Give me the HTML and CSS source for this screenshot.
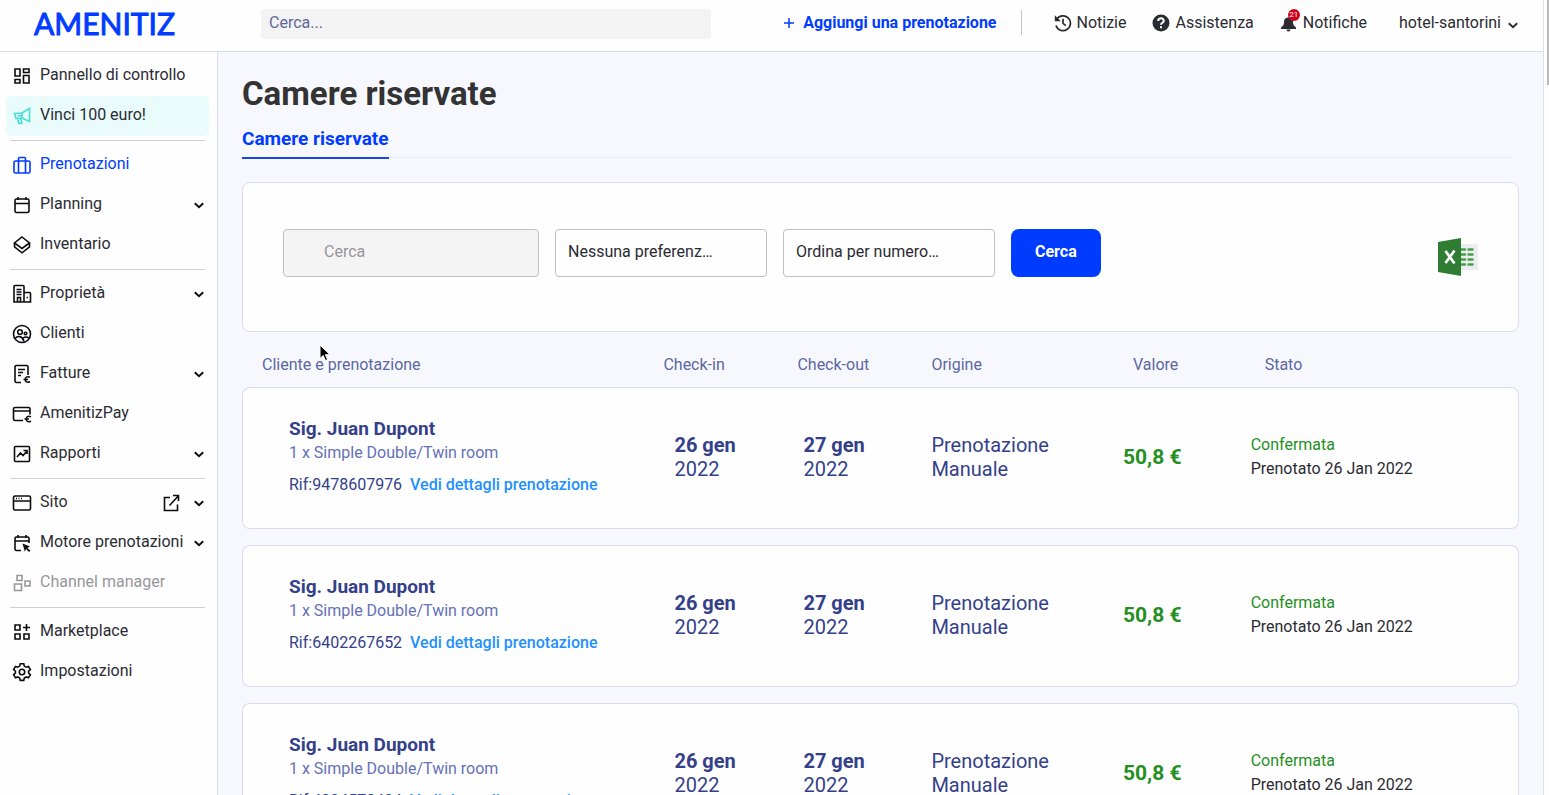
FILE: index.html
```html
<!DOCTYPE html>
<html lang="it">
<head>
    <meta charset="UTF-8">
    <meta name="viewport" content="width=device-width, initial-scale=1.0">
    <title>Camere riservate</title>
    <link rel="stylesheet" href="styles.css">
</head>
<body>
    <svg class="sprite" width="0" height="0" aria-hidden="true">
        <symbol id="chevron" viewBox="0 0 10 10"><path d="M1.5 3.500 5 6.800l3.500-3.300"/></symbol>
    </svg>

    <div class="shell">
        <header class="topbar">
            <a href="#" class="logo">AMENITIZ</a>
            <input type="search" class="top-search" placeholder="Cerca..." aria-label="Cerca nel sito">
            <nav class="top-nav">
                <a href="#" class="add">
                    <svg class="plus" viewBox="0 0 12 12"><path d="M6 1v10M1 6h10"/></svg>
                    Aggiungi una prenotazione
                </a>
                <a href="#" class="top-link news">
                    <svg viewBox="0 0 18 18"><path d="M2.6 5.6A7.4 7.4 0 1 1 2 11.5M9 4.8V9.4l2.8 2.2"/><path class="solid" d="M.8 1.2v6h6z"/></svg>
                    Notizie
                </a>
                <a href="#" class="top-link">
                    <svg viewBox="0 0 18 18"><circle class="solid" cx="9" cy="9" r="8.5"/><path class="light" d="M6.2 7c.1-3.6 5.8-3.4 5.6-.1C11.700 8.800 9 8.700 9 10.800M9 12.300v2"/></svg>
                    Assistenza
                </a>
                <a href="#" class="top-link bell">
                    <svg viewBox="0 0 18 18"><path class="solid" d="M8.500 3.500c-3.400 0-4.500 2.300-4.500 4.500 0 3-1 3.800-3 5.500v1.500h15v-1.500C14 11.800 13 11 13 8c0-2.200-1.100-4.500-4.500-4.500zM6.500 15.500h4a2 2 0 0 1-4 0z"/></svg>
                    <span class="badge">21</span>
                    Notifiche
                </a>
                <a href="#" class="top-link account">
                    hotel-santorini
                    <svg class="arrow"><use href="#chevron"/></svg>
                </a>
            </nav>
        </header>

        <div class="page">
            <nav class="sidebar">
                <a href="#" class="item">
                    <svg viewBox="0 0 20 20"><path d="M3 3h5v7H3zM11.500 3h5.500v3.500h-5.500zM11.500 9.500h5.500v7.500h-5.500zM3 13.500h5V17H3z"/></svg>
                    <span>Pannello di controllo</span>
                </a>
                <a href="#" class="item promo">
                    <svg viewBox="0 0 20 20"><path d="M2.500 7.500 10 7l7.500-4.500v13L10 12l-6 .5zM5.500 12.500 7 17.500l3-.5-1.500-4.800M10 7v5M5.500 9.700H10"/></svg>
                    <span>Vinci 100 euro!</span>
                </a>
                <hr>
                <a href="#" class="item active">
                    <svg viewBox="0 0 20 20"><path d="M3.500 6h13A1.500 1.500 0 0 1 18 7.500v9a1.500 1.500 0 0 1-1.500 1.500h-13A1.500 1.500 0 0 1 2 16.500v-9A1.500 1.500 0 0 1 3.500 6zM6.500 18V3.500a1 1 0 0 1 1-1h5a1 1 0 0 1 1 1V18"/></svg>
                    <span>Prenotazioni</span>
                </a>
                <a href="#" class="item">
                    <svg viewBox="0 0 20 20"><rect x="3" y="4" width="14" height="13.500" rx="1.500"/><path d="M3 8.500h14M6 2v3M14 2v3"/></svg>
                    <span>Planning</span>
                    <svg class="arrow"><use href="#chevron"/></svg>
                </a>
                <a href="#" class="item">
                    <svg viewBox="0 0 20 20"><path d="M10 2 17.500 8 10 13.500 2.500 8zM2.500 8v3.800l7.500 6 7.500-6V8"/></svg>
                    <span>Inventario</span>
                </a>
                <hr>
                <a href="#" class="item">
                    <svg viewBox="0 0 20 20"><path d="M2 18V2.500a1 1 0 0 1 1-1h8a1 1 0 0 1 1 1V18zM12 8.500h5.500a1 1 0 0 1 1 1V18H12M4.500 5.500h5M4.500 8h5M4.500 10.500h5M5.500 18v-4.500h3V18M14.500 13.500h1.500"/></svg>
                    <span>Proprietà</span>
                    <svg class="arrow"><use href="#chevron"/></svg>
                </a>
                <a href="#" class="item">
                    <svg viewBox="0 0 20 20"><circle cx="10" cy="10" r="8.500"/><circle cx="8" cy="8" r="2.300"/><circle cx="13.500" cy="9.500" r="1.300"/><path d="M3 14.500c2.500-3 7-3 9 3M11 14.200c1.800-1.500 4-1.500 5.800-.2"/></svg>
                    <span>Clienti</span>
                </a>
                <a href="#" class="item">
                    <svg viewBox="0 0 20 20"><path d="M9 18.500H4.500A1.500 1.500 0 0 1 3 17V3a1.500 1.500 0 0 1 1.500-1.500h10A1.500 1.500 0 0 1 16 3v8M6 5.500h7M6 8.500h5M6 11.500h3M18 13.200c-3.200-1.400-4.800.3-4.800 2.300s1.600 3.500 4.800 2.200M11.500 15.500H16"/></svg>
                    <span>Fatture</span>
                    <svg class="arrow"><use href="#chevron"/></svg>
                </a>
                <a href="#" class="item">
                    <svg viewBox="0 0 20 20"><path d="M11 16.500H3A1.500 1.500 0 0 1 1.500 15V5A1.500 1.500 0 0 1 3 3.500h13.500A1.500 1.500 0 0 1 18 5v5.500M1.500 7H18M19 12.700c-3.200-1.400-4.800.3-4.800 2.300s1.600 3.500 4.800 2.200M12.500 15H17"/></svg>
                    <span>AmenitizPay</span>
                </a>
                <a href="#" class="item">
                    <svg viewBox="0 0 20 20"><rect x="2.500" y="2.500" width="15" height="15" rx="1"/><path d="m5 13 3.500-4 2.500 2.500 4-4.500M11.500 6.500H15V10"/></svg>
                    <span>Rapporti</span>
                    <svg class="arrow"><use href="#chevron"/></svg>
                </a>
                <hr>
                <a href="#" class="item">
                    <svg viewBox="0 0 20 20"><rect x="1.500" y="3" width="17" height="14" rx="1.500"/><path d="M1.500 8h17M4 5.500h1M6.500 5.500h1M9 5.500h1"/></svg>
                    <span>Sito</span>
                    <svg class="external" viewBox="0 0 20 20"><path d="M9 4.500H3.500V17.500h13V11.500M8.500 12.500 17.500 2.700M12 2.500h5.500V8"/></svg>
                    <svg class="arrow"><use href="#chevron"/></svg>
                </a>
                <a href="#" class="item">
                    <svg viewBox="0 0 20 20"><path d="M9 17.500H4.500A1.500 1.500 0 0 1 3 16V5.500A1.500 1.500 0 0 1 4.500 4h11A1.500 1.500 0 0 1 17 5.500V10M3 8h14M6 2v3M14 2v3"/><path class="solid" d="m10.500 10.500 7.500 3-2.600 1.400 3 2.800-1.400 1.200-2.900-3-1.200 2.800z"/></svg>
                    <span>Motore prenotazioni</span>
                    <svg class="arrow"><use href="#chevron"/></svg>
                </a>
                <a href="#" class="item disabled">
                    <svg viewBox="0 0 20 20"><path d="M5 2.500h5v5H5zM2.500 11h7v6.500h-7zM13 8h5v5h-5z"/></svg>
                    <span>Channel manager</span>
                </a>
                <hr>
                <a href="#" class="item">
                    <svg viewBox="0 0 20 20"><path d="M3 3h5v5H3zM3 12h5v5H3zM12 12h5v5h-5zM14.500 2v7M11 5.500h7"/></svg>
                    <span>Marketplace</span>
                </a>
                <a href="#" class="item">
                    <svg viewBox="0 0 20 20"><path d="m8.200 1.800-.5 2.300-1.900 1.100-2.300-.8-1.900 3.200 1.800 1.500v2l-1.800 1.500 1.900 3.200 2.300-.8 1.900 1.100.5 2.300h3.600l.5-2.300 1.900-1.100 2.300.8 1.900-3.200-1.800-1.500v-2l1.800-1.500-1.900-3.200-2.300.8-1.900-1.100-.5-2.300z"/><circle cx="10" cy="10" r="2.700"/></svg>
                    <span>Impostazioni</span>
                </a>
            </nav>

            <main class="content">
                <h1>Camere riservate</h1>
                <div class="tabs">
                    <a href="#" class="tab">Camere riservate</a>
                </div>

                <section class="panel">
                    <form class="filters">
                        <input type="text" placeholder="Cerca" aria-label="Cerca prenotazione">
                        <select aria-label="Preferenza">
                            <option>Nessuna preferenz…</option>
                        </select>
                        <select aria-label="Ordina">
                            <option>Ordina per numero…</option>
                        </select>
                        <button type="button">Cerca</button>
                    </form>
                    <a href="#" class="excel" aria-label="Excel">
                        <svg viewBox="0 0 40 38"><rect x="20" y="6" width="20" height="26" rx="1" fill="#ececf2"/><path d="M23 11.500h4M30.500 11.500h4M23 16.500h4M30.500 16.500h4M23 21.500h4M30.500 21.500h4M23 26.500h4M30.500 26.500h4" stroke="#43a047" stroke-width="2.500" stroke-linecap="round"/><path d="M0 4 23 0v38L0 34z" fill="#2e7d32"/><path d="m7.500 13 9 12.500M16.500 12.500 7.500 25" stroke="#fff" stroke-width="2.700"/></svg>
                    </a>
                </section>

                <table class="bookings">
                    <thead>
                        <tr>
                            <th class="guest">Cliente e prenotazione</th>
                            <th class="checkin">Check-in</th>
                            <th class="checkout">Check-out</th>
                            <th class="origin">Origine</th>
                            <th class="value">Valore</th>
                            <th class="status">Stato</th>
                        </tr>
                    </thead>
                    <tbody>
                        <tr>
                            <td class="guest">
                                <div class="name">Sig. Juan Dupont</div>
                                <div class="room">1 x Simple Double/Twin room</div>
                                <div class="ref">Rif:9478607976 <a href="#">Vedi dettagli prenotazione</a></div>
                            </td>
                            <td class="checkin"><b>26 gen</b><br>2022</td>
                            <td class="checkout"><b>27 gen</b><br>2022</td>
                            <td class="origin">Prenotazione<br>Manuale</td>
                            <td class="value">50,8 €</td>
                            <td class="status"><span>Confermata</span><br>Prenotato 26 Jan 2022</td>
                        </tr>
                        <tr>
                            <td class="guest">
                                <div class="name">Sig. Juan Dupont</div>
                                <div class="room">1 x Simple Double/Twin room</div>
                                <div class="ref">Rif:6402267652 <a href="#">Vedi dettagli prenotazione</a></div>
                            </td>
                            <td class="checkin"><b>26 gen</b><br>2022</td>
                            <td class="checkout"><b>27 gen</b><br>2022</td>
                            <td class="origin">Prenotazione<br>Manuale</td>
                            <td class="value">50,8 €</td>
                            <td class="status"><span>Confermata</span><br>Prenotato 26 Jan 2022</td>
                        </tr>
                        <tr>
                            <td class="guest">
                                <div class="name">Sig. Juan Dupont</div>
                                <div class="room">1 x Simple Double/Twin room</div>
                                <div class="ref">Rif:4004573404 <a href="#">Vedi dettagli prenotazione</a></div>
                            </td>
                            <td class="checkin"><b>26 gen</b><br>2022</td>
                            <td class="checkout"><b>27 gen</b><br>2022</td>
                            <td class="origin">Prenotazione<br>Manuale</td>
                            <td class="value">50,8 €</td>
                            <td class="status"><span>Confermata</span><br>Prenotato 26 Jan 2022</td>
                        </tr>
                    </tbody>
                </table>
            </main>
        </div>
    </div>
    <div class="scroll"><div class="thumb"></div></div>

    <svg class="pointer" viewBox="0 0 12 18"><path d="M1 1v13.500l3.200-3 2.200 5 2.200-1-2.200-4.800H11z" fill="#000" stroke="#fff"/></svg>
</body>
</html>
```

FILE: styles.css
```css
* {
    box-sizing: border-box;
}
body {
    margin: 0;
    height: 100vh;
    display: flex;
    overflow: hidden;
    font-family: Roboto, "Liberation Sans", sans-serif;
    font-size: 16px;
    color: #2b2b33;
    background-color: #fefefe;
}
a {
    color: inherit;
    text-decoration: none;
}
svg {
    flex: none;
    fill: none;
    stroke: currentColor;
}
input, select, button {
    font: inherit;
}
.sprite {
    position: absolute;
}
.solid {
    fill: currentColor;
    stroke: none;
}
.light {
    stroke: #fff;
    stroke-width: 2;
}
.shell {
    flex: 1;
    min-width: 0;
    display: flex;
    flex-direction: column;
}

/* Top bar */
.topbar {
    flex: none;
    height: 52px;
    display: flex;
    align-items: center;
    padding: 0 24px 4px 34px;
    border-bottom: 1px solid #d8dcf0;
}
.logo {
    width: 227px;
    padding-bottom: 2px;
    font-family: Lato, sans-serif;
    font-size: 30px;
    color: #003cff;
    -webkit-text-stroke: 1px #003cff;
}
.top-search {
    width: 450px;
    height: 30px;
    padding: 0 8px 2px;
    border: none;
    border-radius: 3px;
    background-color: #f3f3f4;
}
.top-search::placeholder {
    color: #5f6799;
    opacity: 1;
}
.top-nav {
    flex: 1;
    display: flex;
    align-items: center;
    justify-content: flex-end;
    padding-bottom: 2px;
}
.add {
    display: flex;
    align-items: center;
    gap: 8px;
    font-weight: bold;
    color: #003cff;
    padding-right: 24px;
    line-height: 25px;
    border-right: 1px solid #c2c3cc;
}
.plus {
    width: 12px;
    height: 12px;
    stroke-width: 1.5;
}
.top-link {
    position: relative;
    display: flex;
    align-items: center;
    gap: 5px;
    margin-left: 26px;
}
.top-link svg {
    width: 18px;
    height: 18px;
    stroke-width: 1.7;
}
.news {
    margin-left: 32px;
}
.account {
    gap: 6px;
    margin-left: 32px;
}
.badge {
    position: absolute;
    left: 8px;
    top: -4px;
    width: 12px;
    height: 12px;
    border-radius: 50%;
    background-color: #d0021b;
    color: #fff;
    font-size: 8px;
    line-height: 12px;
    text-align: center;
}
.top-link .arrow, .item .arrow {
    width: 12px;
    height: 12px;
    stroke-width: 1.6;
}
.account .arrow {
    margin-top: 4px;
}

.page {
    flex: 1;
    min-height: 0;
    display: flex;
}

/* Sidebar */
.sidebar {
    flex: none;
    width: 218px;
    padding: 4px 8px 0 6px;
    border-right: 1px solid #d8dcf0;
}
.sidebar hr {
    margin: 4px;
    border: none;
    border-top: 1px solid #cfd0d6;
}
.item {
    height: 40px;
    display: flex;
    align-items: center;
    padding: 0 4px 0 6px;
    border-radius: 5px;
}
.item svg {
    width: 20px;
    height: 20px;
    color: #0c0c10;
    stroke-width: 1.6;
}
.item span {
    flex: 1;
    margin-left: 8px;
    padding-bottom: 4px;
    white-space: nowrap;
}
.item .external {
    margin-right: 12px;
}
.promo {
    background-color: #e9fbfa;
}
.promo svg {
    color: #45dfd8;
}
.active, .active svg {
    color: #003cff;
}
.disabled, .disabled svg {
    color: #97979b;
}

/* Content */
.content {
    flex: 1;
    min-width: 0;
    overflow: hidden;
    padding: 22px 24px 0;
    background-color: #f7f8fd;
}
h1 {
    margin: 0 0 12px;
    font-size: 33px;
    line-height: 40px;
    color: #333;
}
.tabs {
    margin-right: 6px;
    display: flex;
    height: 32px;
    border-bottom: 1px solid #e9ebf5;
}
.tab {
    height: 33px;
    font-size: 19px;
    font-weight: bold;
    line-height: 26px;
    color: #003cff;
    border-bottom: 2px solid #1a46e8;
}
.panel {
    display: flex;
    align-items: center;
    justify-content: space-between;
    height: 150px;
    margin-top: 24px;
    padding: 0 40px;
    background-color: #fefefe;
    border: 1px solid #d9dcf5;
    border-radius: 8px;
}
.filters {
    display: flex;
    gap: 16px;
    margin-bottom: 8px;
}
.filters input, .filters select {
    height: 48px;
    width: 212px;
    padding: 0 12px 4px;
    border: 1px solid #bfc0c6;
    border-radius: 4px;
    background-color: #fefefe;
    color: #2b2b33;
    appearance: none;
}
.filters input {
    width: 256px;
    padding-left: 40px;
    background-color: #f4f4f4;
}
.filters input::placeholder {
    color: #97979b;
    opacity: 1;
}
.filters button {
    height: 48px;
    padding: 0 24px 4px;
    border: none;
    border-radius: 8px;
    background-color: #003cff;
    color: #fff;
    font-weight: bold;
}
.excel svg {
    display: block;
    width: 40px;
    height: 38px;
    stroke: none;
}

/* Bookings */
.bookings {
    width: 100%;
    margin-top: 11px;
    table-layout: fixed;
    border-collapse: separate;
    border-spacing: 0 16px;
    color: #34418a;
}
th, td {
    padding: 0;
    text-align: left;
}
th {
    font-weight: normal;
    line-height: 12px;
    color: #5c67a3;
}
th.guest {
    width: 33%;
    padding-left: 20px;
}
th.checkin, th.checkout {
    width: 134px;
}
th.origin {
    width: 15%;
}
th.value {
    width: 10%;
    padding-left: 10px;
}
th.status {
    padding-left: 14px;
}
td {
    height: 142px;
    padding-bottom: 2px;
    font-size: 20px;
    line-height: 24px;
    background-color: #fefefe;
    border: 1px solid #d9dcf5;
    border-width: 1px 0;
}
td.guest {
    padding-left: 46px;
    font-size: 16px;
    border-left-width: 1px;
    border-radius: 8px 0 0 8px;
}
td.checkin {
    padding-left: 11px;
}
td.checkout {
    padding-left: 6px;
}
td.value {
    font-size: 21px;
    font-weight: bold;
    color: #249024;
}
td.status {
    font-size: 16px;
    color: #2b2b33;
    border-right-width: 1px;
    border-radius: 0 8px 8px 0;
}
.status span {
    color: #249024;
}
.name {
    font-size: 19px;
    font-weight: bold;
}
.room {
    color: #6571b8;
}
.ref {
    margin-top: 8px;
}
.ref a {
    margin-left: 4px;
    font-weight: 500;
    color: #1e90ff;
}

/* Scroll strip */
.scroll {
    width: 6px;
    border-left: 1px solid #dfe0e4;
}
.thumb {
    height: 85px;
    margin-left: 3px;
    background-color: #b9b9bb;
}
.pointer {
    position: absolute;
    left: 319px;
    top: 344px;
    width: 12px;
    height: 18px;
}
```
